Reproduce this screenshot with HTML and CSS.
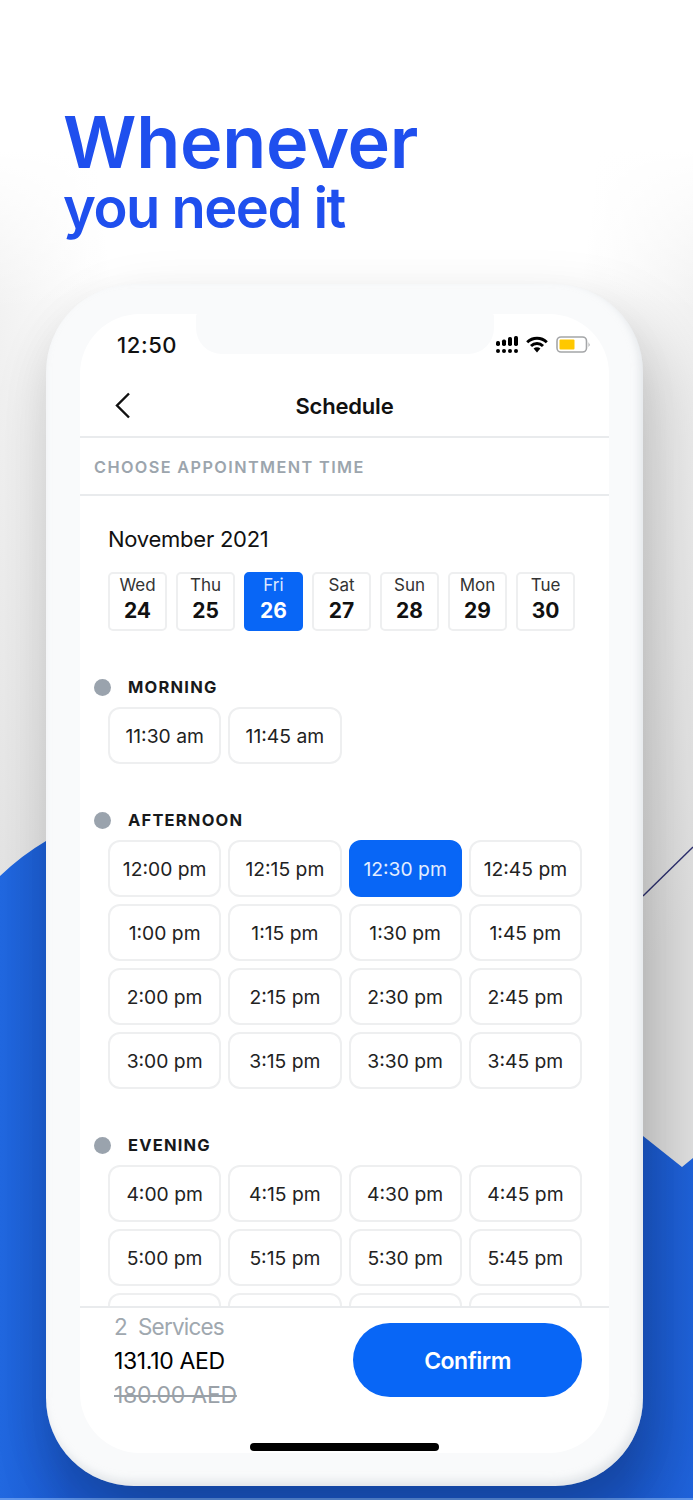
FILE: index.html
```html
<!DOCTYPE html>
<html lang="en">
<head>
<meta charset="utf-8">
<title>Schedule</title>
<link rel="stylesheet" href="styles.css">
</head>
<body>
<div class="canvas">
  <svg class="backdrop" width="693" height="1500" viewBox="0 0 693 1500">
    <defs>
      <linearGradient id="blue" x1="0" x2="1" y1="0" y2="0">
        <stop offset="0" stop-color="#2168e0"/>
        <stop offset="0.1" stop-color="#1b5ad0"/>
        <stop offset="0.9" stop-color="#1b5ad0"/>
        <stop offset="1" stop-color="#1f63dc"/>
      </linearGradient>
    </defs>
    <path d="M0 876 Q22 855 46 841 L643 1136 L682 1167 L693 1158 V1498 H0 Z" fill="url(#blue)"/>
    <rect x="0" y="1498" width="693" height="2" fill="#5f95ec"/>
    <path d="M643 896 L693 847" stroke="#2c2f70" stroke-width="1.4" fill="none"/>
  </svg>

  <header class="hero">
    <h1 class="hero-big">Whenever</h1>
    <p class="hero-small">you need it</p>
  </header>

  <div class="phone">
    <div class="notch"></div>
    <div class="screen">
      <div class="status">
        <span class="clock">12:50</span>
        <div class="status-icons">
          <svg width="22" height="17" viewBox="0 0 22 17" fill="#000">
            <circle cx="2" cy="15" r="2"/><circle cx="8" cy="15" r="2"/><circle cx="14" cy="15" r="2"/><circle cx="20" cy="15" r="2"/>
            <rect x="0" y="5" width="4" height="5" rx="1.7"/><rect x="6" y="3.5" width="4" height="6.5" rx="1.7"/><rect x="12" y="1" width="4" height="9" rx="1.7"/><rect x="18" y="0" width="4" height="10" rx="1.7"/>
          </svg>
          <svg width="22" height="17" viewBox="0 0 22 17" fill="none" stroke="#000" stroke-width="2.9">
            <path d="M1.2 6.2 A14 14 0 0 1 20.8 6.2"/>
            <path d="M5 10 A8.5 8.5 0 0 1 17 10"/>
            <path fill="#000" stroke="none" d="M7.6 12.6 A4.8 4.8 0 0 1 14.4 12.6 L11 16.6 Z"/>
          </svg>
          <svg width="35" height="17" viewBox="0 0 35 17">
            <rect x="1" y="1" width="29.5" height="15" rx="4" fill="#fff" stroke="#a4a6a8" stroke-width="1.6"/>
            <rect x="3.5" y="3.5" width="15" height="10" rx="1" fill="#ffc800"/>
            <path d="M32.6 6 Q34.4 8.5 32.6 11 Z" fill="#8f9194"/>
          </svg>
        </div>
      </div>

      <div class="topbar">
        <svg class="back" width="18" height="27" viewBox="0 0 18 27" fill="none" stroke="#111" stroke-width="2.4"><path d="M15 1.5 L3 13.5 L15 25.5"/></svg>
        <span class="title">Schedule</span>
      </div>

      <div class="subhead">CHOOSE APPOINTMENT TIME</div>

      <div class="scroll">
        <div class="month">November 2021</div>
        <div class="days">
          <div class="day"><span class="dow">Wed</span><b class="dnum">24</b></div>
          <div class="day"><span class="dow">Thu</span><b class="dnum">25</b></div>
          <div class="day on"><span class="dow">Fri</span><b class="dnum">26</b></div>
          <div class="day"><span class="dow">Sat</span><b class="dnum">27</b></div>
          <div class="day"><span class="dow">Sun</span><b class="dnum">28</b></div>
          <div class="day"><span class="dow">Mon</span><b class="dnum">29</b></div>
          <div class="day"><span class="dow">Tue</span><b class="dnum">30</b></div>
        </div>

        <div class="period"><i class="dot"></i>MORNING</div>
        <div class="slots">
          <div class="slot">11:30 am</div>
          <div class="slot">11:45 am</div>
        </div>

        <div class="period"><i class="dot"></i>AFTERNOON</div>
        <div class="slots">
          <div class="slot">12:00 pm</div>
          <div class="slot">12:15 pm</div>
          <div class="slot on">12:30 pm</div>
          <div class="slot">12:45 pm</div>
          <div class="slot">1:00 pm</div>
          <div class="slot">1:15 pm</div>
          <div class="slot">1:30 pm</div>
          <div class="slot">1:45 pm</div>
          <div class="slot">2:00 pm</div>
          <div class="slot">2:15 pm</div>
          <div class="slot">2:30 pm</div>
          <div class="slot">2:45 pm</div>
          <div class="slot">3:00 pm</div>
          <div class="slot">3:15 pm</div>
          <div class="slot">3:30 pm</div>
          <div class="slot">3:45 pm</div>
        </div>

        <div class="period"><i class="dot"></i>EVENING</div>
        <div class="slots">
          <div class="slot">4:00 pm</div>
          <div class="slot">4:15 pm</div>
          <div class="slot">4:30 pm</div>
          <div class="slot">4:45 pm</div>
          <div class="slot">5:00 pm</div>
          <div class="slot">5:15 pm</div>
          <div class="slot">5:30 pm</div>
          <div class="slot">5:45 pm</div>
          <div class="slot"></div>
          <div class="slot"></div>
          <div class="slot"></div>
          <div class="slot"></div>
        </div>
      </div>

      <div class="footer">
        <div class="summary">
          <div class="services">2&nbsp; Services</div>
          <div class="price">131.10 AED</div>
          <div class="old">180.00 AED</div>
        </div>
        <div class="confirm">Confirm</div>
      </div>
      <div class="home-row"><div class="home"></div></div>
    </div>
  </div>
</div>
</body>
</html>
```

FILE: styles.css
```css
* { box-sizing: border-box; }
html, body { margin: 0; padding: 0; }
body { width: 693px; height: 1500px; overflow: hidden; background: #fff; }

.canvas {
  position: relative;
  width: 693px;
  height: 1500px;
  overflow: hidden;
  padding-left: 46px;
  background:
    linear-gradient(180deg, #fff 150px, rgba(255, 255, 255, 0) 310px),
    radial-gradient(ellipse 420px 800px at 50% 100px, #fff 60%, #f0f0f0 90%, #e2e2e2 130%);
  font-family: Inter, "Liberation Sans", sans-serif;
  color: #111;
}
.backdrop { position: absolute; left: 0; top: 0; }

.hero {
  position: relative;
  height: 284px;
  margin-left: 17px;
  padding-top: 109px;
  color: #1f4fee;
  font-family: Inter, sans-serif;
  font-weight: 600;
}
.hero-big { margin: 0; font-size: 72px; line-height: 66px; font-weight: 600; letter-spacing: -.3px; }
.hero-small { margin: 3px 0 0; font-size: 56px; line-height: 60px; letter-spacing: -1.5px; }

.phone {
  position: relative;
  width: 597px;
  height: 1202px;
  padding: 30px 34px 33px;
  border-radius: 88px;
  background: #f9fafb;
  box-shadow:
    inset -3px -5px 8px rgba(190, 198, 205, .4),
    18px 34px 70px rgba(0, 0, 0, .2),
    -4px 24px 46px rgba(0, 0, 0, .07);
}
.notch {
  position: absolute;
  z-index: 2;
  left: 150px;
  top: 30px;
  width: 298px;
  height: 40px;
  border-radius: 2px 2px 26px 26px;
  background: #f9fafb;
}
.screen {
  display: flex;
  flex-direction: column;
  height: 100%;
  overflow: hidden;
  border-radius: 60px;
  background: #fff;
}

.status { display: flex; justify-content: space-between; align-items: center; height: 62px; padding: 0 18px 0 37px; flex: none; }
.clock { font-size: 22px; font-weight: 500; letter-spacing: .6px; margin-top: -1px; }
.status-icons { display: flex; align-items: center; gap: 8px; margin-top: -2px; position: relative; z-index: 3; }

.topbar {
  position: relative;
  display: flex;
  align-items: center;
  justify-content: center;
  height: 62px;
  flex: none;
  border-bottom: 2px solid #e9ebed;
}
.back { position: absolute; left: 34px; top: 16px; }
.title { font-size: 22px; font-weight: 600; letter-spacing: -.2px; }

.subhead {
  flex: none;
  height: 58px;
  padding: 19px 0 0 14px;
  border-bottom: 2px solid #e9ebed;
  color: #9ca5ad;
  font-size: 16.3px;
  line-height: 20px;
  font-weight: 600;
  letter-spacing: 1.38px;
}

.scroll { flex: 1; min-height: 0; overflow: hidden; padding: 28px 27px 0 28px; }
.month { font-size: 22px; line-height: 30px; letter-spacing: -.25px; }
.days { display: flex; gap: 9px; margin-top: 18px; }
.day {
  display: flex;
  flex-direction: column;
  align-items: center;
  width: 59px;
  height: 59px;
  padding-top: 0;
  border: 2px solid #eeeff0;
  border-radius: 5px;
}
.dow { font-size: 17px; line-height: 22px; color: #333; }
.dnum { font-size: 21px; line-height: 29px; font-weight: 700; }
.day.on { background: #0866f6; border-color: #0866f6; color: #fff; }
.day.on .dow { color: #dbe8ff; }

.period {
  display: flex;
  align-items: center;
  height: 20px;
  margin: 46px 0 10px -14px;
  font-size: 16.5px;
  font-weight: 700;
  letter-spacing: 1.2px;
  color: #17191b;
}
.dot { width: 17px; height: 17px; margin-right: 17px; border-radius: 50%; background: #9aa3ad; }

.slots { display: grid; grid-template-columns: repeat(4, 1fr); gap: 7px; }
.slot {
  display: flex;
  align-items: center;
  justify-content: center;
  height: 57px;
  border: 2px solid #eeeff0;
  border-radius: 12px;
  font-size: 19.3px;
  color: #222;
}
.slot.on { background: #0866f6; border-color: #0866f6; color: #e3edff; }

.footer {
  flex: none;
  display: flex;
  justify-content: space-between;
  align-items: flex-start;
  height: 110px;
  padding: 0 27px 0 34px;
  border-top: 2px solid #e9ebed;
}
.summary { display: flex; flex-direction: column; font-size: 23px; line-height: 34px; letter-spacing: -.35px; }
.services { color: #a0a8af; margin-top: 2px; font-size: 22.5px; letter-spacing: -.8px; }
.price { color: #000; }
.old { color: #9aa1a8; text-decoration: line-through; letter-spacing: -.25px; }
.confirm {
  display: flex;
  align-items: center;
  justify-content: center;
  width: 229px;
  height: 74px;
  margin-top: 15px;
  padding-top: 1px;
  border-radius: 37px;
  background: #0866f6;
  color: #fff;
  font-size: 23px;
  font-weight: 600;
  letter-spacing: -.5px;
}
.home-row { flex: none; height: 37px; display: flex; justify-content: center; padding-top: 27px; }
.home { width: 189px; height: 8px; border-radius: 4px; background: #000; }
```
